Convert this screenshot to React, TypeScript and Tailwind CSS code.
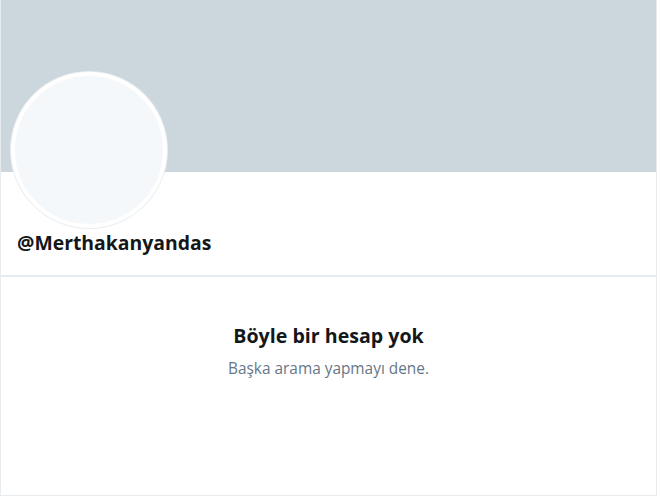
export default function App() {
  return (
    <div className="h-[497px] w-[660px] overflow-hidden bg-white font-['Open_Sans',sans-serif]">
      <div className="flex h-[496px] w-[657px] flex-col border-x border-b border-[#e6ecf0]">
        {/* banner */}
        <div className="h-[172px] shrink-0 bg-[#ccd6dd]" />

        {/* profile header */}
        <div className="relative h-[105px] shrink-0 border-b-2 border-[#e6ecf0]">
          <div className="absolute left-[10px] top-[-100px] h-[156px] w-[156px] rounded-full border-4 border-white bg-[#f5f8fa] shadow-[0_0_0_1px_#e9eef2]" />
          <div className="absolute left-[16px] top-[59px] text-[19.4px] font-bold leading-[24px] text-[#14171a]">
            @Merthakanyandas
          </div>
        </div>

        {/* empty state */}
        <div className="flex flex-col items-center pt-[47px]">
          <div className="text-[19.6px] font-bold leading-[24px] text-[#14171a]">Böyle bir hesap yok</div>
          <div className="mt-[11px] text-[15.4px] leading-[20px] text-[#657786]">Başka arama yapmayı dene.</div>
        </div>
      </div>
    </div>
  );
}
